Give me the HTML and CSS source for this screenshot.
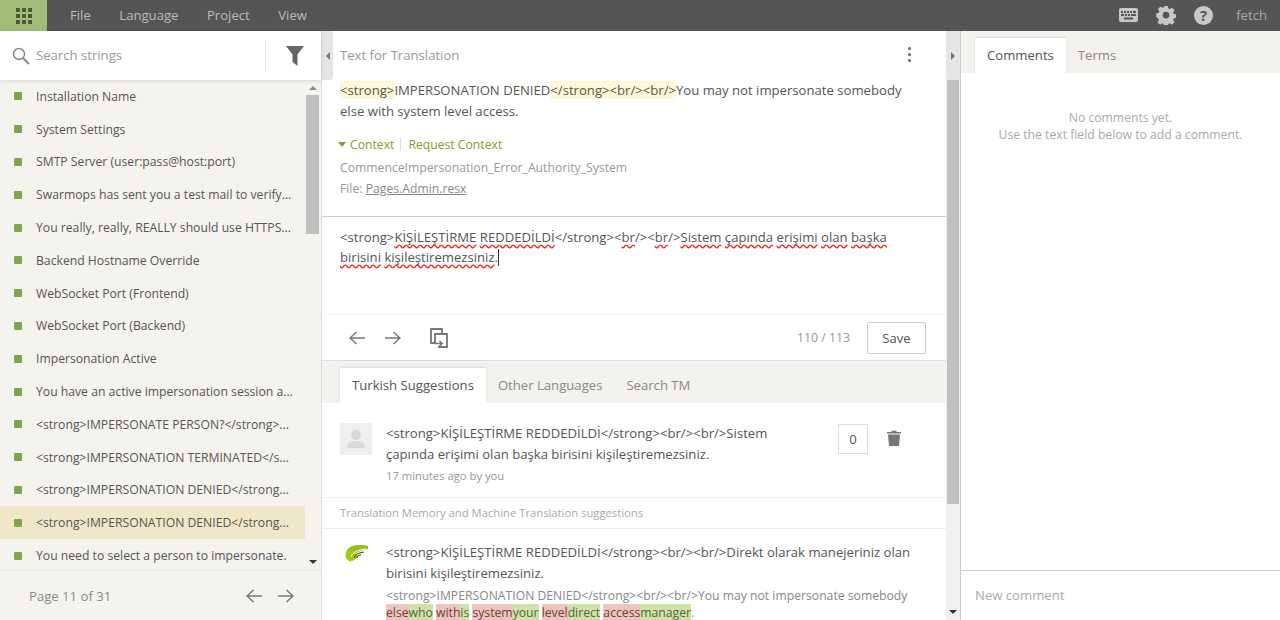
FILE: index.html
```html
<!DOCTYPE html>
<html>
	<head>
		<meta charset="utf-8" />
		<title>Translate</title>
		<link rel="stylesheet" href="styles.css">
	</head>
	<body>
		<div class="topbar">
			<div class="appbtn">
				<svg width="16" height="16" viewBox="0 0 16 16" fill="#4a5a34"><rect x="0" y="0" width="4" height="4"/><rect x="6" y="0" width="4" height="4"/><rect x="12" y="0" width="4" height="4"/><rect x="0" y="6" width="4" height="4"/><rect x="6" y="6" width="4" height="4"/><rect x="12" y="6" width="4" height="4"/><rect x="0" y="12" width="4" height="4"/><rect x="6" y="12" width="4" height="4"/><rect x="12" y="12" width="4" height="4"/></svg>
			</div>
			<div class="menu">
				<span>File</span>
				<span>Language</span>
				<span>Project</span>
				<span>View</span>
			</div>
			<div class="topright">
				<svg width="19" height="14" viewBox="0 0 19 14"><rect width="19" height="14" rx="2" fill="#c8c8c8"/><g fill="#555"><rect x="2" y="3" width="2" height="2"/><rect x="5" y="3" width="2" height="2"/><rect x="8" y="3" width="2" height="2"/><rect x="11" y="3" width="2" height="2"/><rect x="14" y="3" width="3" height="2"/><rect x="2" y="6" width="3" height="2"/><rect x="6" y="6" width="2" height="2"/><rect x="9" y="6" width="2" height="2"/><rect x="12" y="6" width="5" height="2"/><rect x="5" y="9.500" width="9" height="2"/></g></svg>
				<svg class="gear" width="20" height="20" viewBox="0 0 24 24"><path fill="#c8c8c8" fill-rule="evenodd" d="M9.500 0h5l.6 3.300 2 .8 2.800-1.900 3.500 3.500-1.900 2.800.8 2 3.300.6v5l-3.300.6-.8 2 1.900 2.800-3.500 3.500-2.800-1.900-2 .8-.6 3.300h-5l-.6-3.300-2-.8-2.800 1.900-3.500-3.500 1.900-2.800-.8-2L-1 14.500v-5l3.300-.6.8-2-1.900-2.800 3.500-3.500 2.800 1.900 2-.8zM12 7.500a4.500 4.500 0 1 0 0 9 4.500 4.500 0 0 0 0-9z" transform="translate(1.200 1.200) scale(.9)"/></svg>
				<div class="help">?</div>
				<span class="user">fetch</span>
			</div>
		</div>
		<div class="main">
			<div class="left">
				<div class="search">
					<svg width="18" height="18" viewBox="0 0 18 18" fill="none" stroke="#8a8a8a" stroke-width="1.500"><circle cx="7" cy="7" r="5.500"/><path d="M11 11l6 6" stroke-width="2"/></svg>
					<span class="searchtext">Search strings</span>
					<div class="filter">
						<svg width="18" height="20" viewBox="0 0 18 20"><path fill="#666" d="M0 0h18l-6.500 8.500V20l-5-4V8.500z"/></svg>
					</div>
				</div>
				<div class="listwrap">
					<div class="list">
						<div class="row"><i></i><span>Installation Name</span></div>
						<div class="row"><i></i><span>System Settings</span></div>
						<div class="row"><i></i><span>SMTP Server (user:pass@host:port)</span></div>
						<div class="row"><i></i><span>Swarmops has sent you a test mail to verify...</span></div>
						<div class="row"><i></i><span>You really, really, REALLY should use HTTPS...</span></div>
						<div class="row"><i></i><span>Backend Hostname Override</span></div>
						<div class="row"><i></i><span>WebSocket Port (Frontend)</span></div>
						<div class="row"><i></i><span>WebSocket Port (Backend)</span></div>
						<div class="row"><i></i><span>Impersonation Active</span></div>
						<div class="row"><i></i><span>You have an active impersonation session a...</span></div>
						<div class="row"><i></i><span>&lt;strong&gt;IMPERSONATE PERSON?&lt;/strong&gt;...</span></div>
						<div class="row"><i></i><span>&lt;strong&gt;IMPERSONATION TERMINATED&lt;/s...</span></div>
						<div class="row"><i></i><span>&lt;strong&gt;IMPERSONATION DENIED&lt;/strong...</span></div>
						<div class="row sel"><i></i><span>&lt;strong&gt;IMPERSONATION DENIED&lt;/strong...</span></div>
						<div class="row"><i></i><span>You need to select a person to impersonate.</span></div>
					</div>
					<div class="sbar sbar-list">
						<div class="up"></div>
						<div class="thumb"></div>
						<div class="down"></div>
					</div>
				</div>
				<div class="pager">
					<span>Page 11 of 31</span>
					<div class="arrows">
						<svg width="16" height="14" viewBox="0 0 16 14" fill="none" stroke="#777" stroke-width="1.500"><path d="M16 7H1M7.500 1L1 7l6.500 6"/></svg>
						<svg width="16" height="14" viewBox="0 0 16 14" fill="none" stroke="#777" stroke-width="1.500"><path d="M0 7h15M8.500 1L15 7l-6.500 6"/></svg>
					</div>
				</div>
			</div>
			<div class="center">
				<div class="handle"><b class="tri-left"></b></div>
				<div class="centerbody">
					<div class="texthead">
						<span>Text for Translation</span>
						<div class="dots"><i></i><i></i><i></i></div>
					</div>
					<div class="source">
						<div class="srctext"><mark>&lt;strong&gt;</mark>IMPERSONATION DENIED<mark>&lt;/strong&gt;&lt;br/&gt;&lt;br/&gt;</mark>You may not impersonate somebody<br/>else with system level access.</div>
						<div class="ctx"><b class="tri-down"></b><span>Context</span><em></em><span>Request Context</span></div>
						<div class="key">CommenceImpersonation_Error_Authority_System</div>
						<div class="key">File: <u>Pages.Admin.resx</u></div>
					</div>
					<div class="editor">&lt;strong&gt;<s>KİŞİLEŞTİRME</s> <s>REDDEDİLDİ</s>&lt;/strong&gt;&lt;<s>br</s>/&gt;&lt;<s>br</s>/&gt;<s>Sistem</s> <s>çapında</s> <s>erişimi</s> <s>olan</s> <s>başka</s><br/><s>birisini</s> <s>kişileştiremezsiniz</s>.<span class="caret"></span></div>
					<div class="tools">
						<svg width="16" height="14" viewBox="0 0 16 14" fill="none" stroke="#777" stroke-width="1.500"><path d="M16 7H1M7.500 1L1 7l6.500 6"/></svg>
						<svg width="16" height="14" viewBox="0 0 16 14" fill="none" stroke="#777" stroke-width="1.500"><path d="M0 7h15M8.500 1L15 7l-6.500 6"/></svg>
						<svg class="copy" width="18" height="20" viewBox="0 0 18 20" fill="none" stroke="#777" stroke-width="1.800"><path d="M5 15H1V1h11v5"/><path d="M5 15V6h12v13H8"/><path d="M5 15.500h7M9.500 13l2.800 2.500L9.500 18" stroke-width="1.400"/></svg>
						<span class="count">110 / 113</span>
						<div class="save">Save</div>
					</div>
					<div class="tabs">
						<div class="tab on">Turkish Suggestions</div>
						<div class="tab">Other Languages</div>
						<div class="tab">Search TM</div>
					</div>
					<div class="sugg">
						<div class="avatar">
							<svg width="32" height="32" viewBox="0 0 32 32"><circle cx="16" cy="12" r="5" fill="#d8d8d8"/><path fill="#d8d8d8" d="M7 25c0-6 4-7 9-7s9 1 9 7z"/></svg>
						</div>
						<div class="suggtext">
							<div>&lt;strong&gt;KİŞİLEŞTİRME REDDEDİLDİ&lt;/strong&gt;&lt;br/&gt;&lt;br/&gt;Sistem çapında erişimi olan başka birisini kişileştiremezsiniz.</div>
							<div class="meta">17 minutes ago by you</div>
						</div>
						<div class="score">0</div>
						<svg class="trash" width="14" height="16" viewBox="0 0 14 16"><path fill="#777" d="M0 2h4.500V.800h5V2H14v1.500H0zM1 4.500h12L12 16H2z"/></svg>
					</div>
					<div class="tmhead">Translation Memory and Machine Translation suggestions</div>
					<div class="tm">
						<div class="tmlogo">
							<svg width="23" height="17" viewBox="0 0 23 17" fill="none"><path fill="#97c014" d="M23 1C15-1 6-.5 2.500 4.500-.5 9 .5 14 6 17c-.5-4 3-10.500 17-13z"/><ellipse cx="6" cy="10.500" rx="5.500" ry="5.500" fill="#a6ca1a"/><path d="M21 4C14 4.500 8.500 6.500 6 11.500" stroke="#fff" stroke-width="1"/><path d="M19 7C14.500 7.500 10.500 9 9 13M16 9.800c-2 .2-3.800 1.200-4.500 3.400" stroke="#3f5a0c" stroke-width="1.100"/></svg>
						</div>
						<div class="suggtext">
							<div>&lt;strong&gt;KİŞİLEŞTİRME REDDEDİLDİ&lt;/strong&gt;&lt;br/&gt;&lt;br/&gt;Direkt olarak manejeriniz olan birisini kişileştiremezsiniz.</div>
							<div class="tmsrc">&lt;strong&gt;IMPERSONATION DENIED&lt;/strong&gt;&lt;br/&gt;&lt;br/&gt;You may not impersonate somebody<br/><span class="del">else</span><span class="ins">who</span> <span class="del">with</span><span class="ins">is</span> <span class="del">system</span><span class="ins">your</span> <span class="del">level</span><span class="ins">direct</span> <span class="del">access</span><span class="ins">manager</span>.</div>
						</div>
					</div>
				</div>
			</div>
			<div class="sbar sbar-main">
				<div class="handle2"><b class="tri-right"></b></div>
				<div class="thumb"></div>
				<div class="down"></div>
			</div>
			<div class="right">
				<div class="tabs tabs-right">
					<div class="tab on">Comments</div>
					<div class="tab">Terms</div>
				</div>
				<div class="nocomments">No comments yet.<br/>Use the text field below to add a comment.</div>
				<div class="newcomment">New comment</div>
			</div>
		</div>
	</body>
</html>
```

FILE: styles.css
```css
html,body
{
	height: 100%;
	margin: 0;
	padding: 0;
}

body
{
	background-color: #FFF;
	color: #555;
	font-family: "Open Sans",sans-serif;
	font-size: 13.130px;
	height: 620px;
	overflow: hidden;
}

.topbar
{
	background-color: #555;
	color: #BBB;
	display: flex;
	align-items: center;
	height: 31px;
}

.appbtn
{
	background-color: #A0BE78;
	display: flex;
	align-items: center;
	justify-content: center;
	height: 31px;
	width: 47px;
}

.menu
{
	display: flex;
	gap: 28.500px;
	padding-left: 23px;
	padding-bottom: 1px;
}

.topright
{
	display: flex;
	align-items: center;
	margin-left: auto;
	padding-right: 13px;
	padding-bottom: 1px;
}

.gear
{
	margin-left: 18px;
}

.help
{
	background-color: #C8C8C8;
	border-radius: 50%;
	color: #555;
	font-size: 15px;
	font-weight: 700;
	height: 19px;
	line-height: 19px;
	margin-left: 18px;
	text-align: center;
	width: 19px;
}

.user
{
	color: #AAA;
	margin-left: 23px;
}

.main
{
	display: flex;
	height: 589px;
}

/* strings column */
.left
{
	background-color: #F5F3EE;
	border-right: 1px solid #DDD;
	display: flex;
	flex-direction: column;
	flex: none;
	width: 321px;
}

.search
{
	background-color: #FFF;
	box-shadow: 0 1px 4px rgba(0,0,0,0.12);
	display: flex;
	align-items: center;
	height: 49px;
	padding-left: 12px;
	position: relative;
}

.searchtext
{
	color: #999;
	margin-left: 6px;
	padding-bottom: 2px;
}

.filter
{
	border-left: 1px solid #E8E8E8;
	display: flex;
	align-items: center;
	justify-content: center;
	height: 32px;
	margin-left: auto;
	padding-left: 2px;
	width: 53px;
}

.listwrap
{
	display: flex;
	flex: 1;
	min-height: 0;
}

.list
{
	flex: 1;
	overflow: hidden;
}

.row
{
	display: flex;
	align-items: center;
	height: 32.800px;
	padding-left: 14px;
	font-size: 12.200px;
	white-space: nowrap;
}

.row i
{
	background-color: #7EA74B;
	border-radius: 1px;
	flex: none;
	height: 8px;
	margin-right: 14px;
	width: 8px;
}

.row.sel
{
	background-color: #F0E7C8;
}

.sbar
{
	display: flex;
	flex-direction: column;
	flex: none;
}

.sbar-list
{
	width: 16px;
}

.sbar-list .up
{
	border-bottom: 4px solid #888;
	border-left: 4px solid transparent;
	border-right: 4px solid transparent;
	height: 0;
	margin: 6px auto 5px;
	width: 0;
}

.sbar-list .thumb
{
	background-color: #C0C0C0;
	height: 139px;
	margin: 0 2px 0 1px;
}

.sbar .down
{
	border-top: 4px solid #333;
	border-left: 4px solid transparent;
	border-right: 4px solid transparent;
	height: 0;
	margin: auto auto 6px;
	width: 0;
}

.pager
{
	border-top: 1px solid #EAE8E3;
	color: #888;
	display: flex;
	align-items: center;
	height: 49px;
	padding-left: 29px;
	padding-right: 27px;
}

.arrows
{
	display: flex;
	gap: 16px;
	margin-left: auto;
}

/* middle column */
.center
{
	display: flex;
	flex: none;
	overflow: hidden;
	width: 624px;
}

.handle
{
	background-color: #E6E6E6;
	border-radius: 0 0 3px 0;
	display: flex;
	align-items: center;
	justify-content: center;
	flex: none;
	height: 49px;
	width: 11px;
}

.tri-left
{
	border-right: 4px solid #777;
	border-top: 4px solid transparent;
	border-bottom: 4px solid transparent;
}

.tri-right
{
	border-left: 4px solid #777;
	border-top: 4px solid transparent;
	border-bottom: 4px solid transparent;
}

.centerbody
{
	flex: 1;
	min-width: 0;
	margin-left: -11px;
}

.texthead
{
	color: #999;
	display: flex;
	align-items: center;
	justify-content: space-between;
	height: 47px;
	padding-bottom: 2px;
	padding-left: 18px;
	padding-right: 35px;
}

.dots i
{
	background-color: #666;
	border-radius: 50%;
	display: block;
	height: 3.500px;
	margin: 2.500px 0;
	width: 3.500px;
}

.source
{
	border-bottom: 1px solid #CCC;
	height: 136px;
	padding-left: 18px;
	padding-right: 30px;
}

.srctext
{
	line-height: 21px;
}

mark
{
	background-color: #FFF8D6;
	color: inherit;
}

.ctx
{
	color: #8A9A2A;
	display: flex;
	align-items: center;
	font-size: 12.200px;
	margin-top: 12px;
	height: 20px;
}

.tri-down
{
	border-top: 5px solid #8A9A2A;
	border-left: 4px solid transparent;
	border-right: 4px solid transparent;
	margin-left: -2px;
	margin-right: 4px;
}

.ctx em
{
	background-color: #DDD;
	height: 13px;
	margin: 0 7px 0 6px;
	width: 1px;
}

.key
{
	color: #999;
	font-size: 12.200px;
	line-height: 21px;
}

.ctx + .key
{
	margin-top: 3px;
}

.key u
{
	color: #888;
}

.editor
{
	border-bottom: 1px solid #F0F0F0;
	height: 86px;
	line-height: 19.500px;
	margin-left: 4px;
	padding-left: 14px;
	padding-top: 11px;
	padding-right: 30px;
}

.editor s
{
	text-decoration: underline wavy #E22;
	text-decoration-skip-ink: none;
	text-underline-offset: 2px;
}

.caret
{
	border-left: 1px solid #333;
	display: inline-block;
	height: 17px;
	vertical-align: text-bottom;
}

.tools
{
	border-bottom: 1px solid #DDD;
	display: flex;
	align-items: center;
	height: 45px;
	padding-left: 27px;
	padding-right: 20px;
}

.tools svg + svg
{
	margin-left: 20px;
}

.tools .copy
{
	margin-left: 29px;
}

.count
{
	color: #999;
	font-size: 12.300px;
	margin-left: auto;
	margin-right: 17px;
}

.save
{
	border: 1px solid #CCC;
	border-radius: 2px;
	height: 30px;
	line-height: 30px;
	text-align: center;
	width: 57px;
}

.tabs
{
	background-color: #F3F2EE;
	display: flex;
	align-items: flex-end;
	height: 42px;
	padding-left: 18px;
}

.tab
{
	color: #888;
	height: 35px;
	line-height: 34px;
	padding: 0 12px;
}

.tab.on
{
	background-color: #FFF;
	box-shadow: 0 -1px 2px rgba(0,0,0,0.1);
	color: #555;
}

.sugg
{
	border-bottom: 1px solid #EEE;
	display: flex;
	align-items: flex-start;
	height: 74px;
	padding: 20px 0 0 18px;
}

.avatar
{
	background-color: #EFEFEF;
	flex: none;
	height: 32px;
	margin-right: 14px;
	width: 32px;
}

.suggtext
{
	line-height: 21px;
	width: 410px;
}

.tm .suggtext
{
	width: 540px;
}

.meta
{
	color: #999;
	font-size: 11.250px;
}

.score
{
	border: 1px solid #DDD;
	flex: none;
	height: 28px;
	line-height: 28px;
	margin-left: 42px;
	margin-top: 1px;
	text-align: center;
	width: 28px;
}

.trash
{
	flex: none;
	margin-left: 19px;
	margin-top: 7px;
}

.tmhead
{
	border-bottom: 1px solid #EEE;
	color: #AAA;
	font-size: 11.250px;
	height: 30px;
	line-height: 30px;
	padding-left: 18px;
}

.tm
{
	display: flex;
	align-items: flex-start;
	padding: 13px 0 0 18px;
}

.tmlogo
{
	flex: none;
	margin-right: 18px;
	margin-left: 5px;
	padding-top: 3px;
	width: 23px;
}

.tmsrc
{
	color: #888;
	font-size: 12.200px;
	line-height: 17px;
	margin-top: 3px;
}

.del
{
	background-color: #EEC4BC;
	color: #644;
}

.ins
{
	background-color: #CFE3A8;
	color: #564;
}

/* middle scrollbar and handle */
.sbar-main
{
	background-color: #F0F0F0;
	border-right: 1px solid #CCC;
	width: 14px;
}

.handle2
{
	background-color: #E6E6E6;
	border-radius: 0 0 0 3px;
	display: flex;
	align-items: center;
	justify-content: center;
	height: 49px;
}

.sbar-main .thumb
{
	background-color: #C0C0C0;
	height: 424px;
	margin: 0 1px;
}

/* comments column */
.right
{
	display: flex;
	flex-direction: column;
	flex: 1;
	min-width: 0;
}

.tabs-right
{
	padding-left: 14px;
	flex: none;
}

.nocomments
{
	color: #AAA;
	flex: 1;
	font-size: 12.200px;
	line-height: 17px;
	padding-top: 36px;
	text-align: center;
}

.newcomment
{
	border-top: 1px solid #CCC;
	color: #AAA;
	height: 49px;
	line-height: 48px;
	padding-left: 14px;
}
```
